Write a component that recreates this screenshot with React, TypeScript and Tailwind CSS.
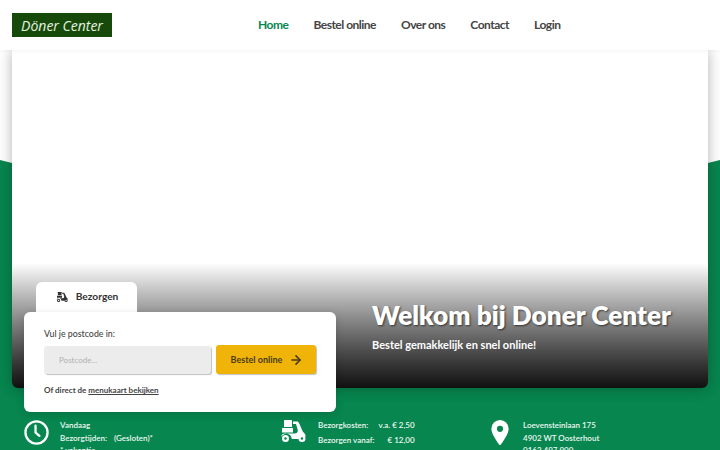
import React from 'react'
import { ArrowRight } from 'lucide-react'

const lato = { fontFamily: 'Lato, sans-serif' }

const ScooterIcon = ({ className }: { className?: string }) => (
  <svg viewBox="0 0 26 22" className={className} fill="currentColor">
    <rect x="4" y="0" width="8" height="7" rx="0.5" />
    <rect x="2" y="8" width="11" height="4.500" rx="0.5" />
    <path d="M13 1.500h4c1 0 1.600.6 2 1.600L23 12c1.600 1 2.500 2.500 2.700 4.500h-3.200c-1.600 0-3 1-3.600 2.600h-7.200c0-3-2.200-5.300-5.200-5.300-2.300 0-4.300 1.300-5.300 3.300C1.200 14.500 3 13.500 5 13.500h9.500c2.500 0 3.700-1.500 3.200-3.800L16 4h-3z" />
    <path fillRule="evenodd" d="M5.500 15a3.500 3.500 0 1 0 0 7 3.500 3.500 0 0 0 0-7zm0 2.200a1.300 1.300 0 1 1 0 2.600 1.300 1.300 0 0 1 0-2.600zM22 15a3.500 3.500 0 1 0 0 7 3.500 3.500 0 0 0 0-7zm0 2.200a1.300 1.300 0 1 1 0 2.600 1.300 1.300 0 0 1 0-2.600z" />
  </svg>
)

const App: React.FC = () => {
  const links = ['Home', 'Bestel online', 'Over ons', 'Contact', 'Login']

  return (
    <div className="relative h-[450px] w-[720px] overflow-hidden bg-white" style={lato}>
      {/* green backdrop behind the hero */}
      <div className="absolute inset-x-0 top-[160px] bottom-0 bg-[#07864f] [clip-path:polygon(0_0,12px_3px,708px_3px,100%_0,100%_100%,0_100%)]"></div>

      <header className="relative z-10 flex h-[50px] items-center bg-white pl-3 shadow-[0_1px_4px_rgba(0,0,0,0.05)]">
        <div className="flex h-6 w-[100px] items-center justify-center whitespace-nowrap bg-[#174a0a] text-[#e6f2e0] italic" style={{ fontFamily: '"Open Sans", sans-serif', fontSize: 14 }}>
          Döner Center
        </div>
        <nav className="ml-[146px] flex gap-[25px]">
          {links.map((l, i) => (
            <a key={l} className={`text-[12px] font-bold tracking-[-0.5px] ${i === 0 ? 'text-[#07864f]' : 'text-[#444]'}`}>{l}</a>
          ))}
        </nav>
      </header>

      <main className="relative mx-3 h-[338px] rounded-b-md bg-gradient-to-b from-white from-[63%] to-[#111] shadow-[0_0_14px_rgba(0,0,0,0.3)]">
        <div className="absolute top-[232px] left-[24px] flex h-[30px] w-[101px] items-center justify-center gap-2 rounded-t-md bg-white pl-[1px] text-[10.200px] font-bold text-[#333]">
          <ScooterIcon className="h-[10px] w-3" />
          Bezorgen
        </div>
        <div className="absolute top-[262px] left-[12px] z-10 h-[100px] w-[312px] rounded-md bg-white px-5 pt-[15px] shadow-[0_2px_8px_rgba(0,0,0,0.15)]">
          <p className="text-[8.800px] leading-[14px] font-medium text-[#444]">Vul je postcode in:</p>
          <div className="mt-[4px] flex items-start gap-[5px]">
            <div className="mt-[1px] flex h-[28px] w-[167px] items-center rounded-[3px] bg-[#ececec] pl-[15px] text-[8px] text-[#b0b0b0] shadow-[1px_1px_1px_rgba(0,0,0,0.25)]">Postcode...</div>
            <div className="flex h-[29px] w-[100px] items-center justify-center gap-[7px] rounded-[3px] bg-[#f0b409] pl-[2px] text-[9px] font-bold text-[#4a3a10] shadow-[1px_1px_1px_rgba(0,0,0,0.25)]">
              Bestel online
              <ArrowRight className="h-[14px] w-[14px]" strokeWidth={2.75} />
            </div>
          </div>
          <p className="mt-[9px] text-[8px] leading-[14px] font-bold text-[#444]">Of direct de <span className="underline">menukaart bekijken</span></p>
        </div>
        <div className="absolute top-[248px] left-[360px] text-white">
          <h1 className="text-[26.200px] leading-[34px] font-extrabold [text-shadow:1px_1px_2px_rgba(0,0,0,0.6)]">Welkom bij Doner Center</h1>
          <p className="mt-[5px] text-[11px] font-bold">Bestel gemakkelijk en snel online!</p>
        </div>
      </main>

      <section className="relative grid grid-cols-[257px_210px_1fr] pt-[31px] pl-6 text-[8px] leading-[12.500px] font-semibold text-[#eef8f2]">
        <div className="flex gap-[11px]">
          <svg viewBox="0 0 26 26" className="mt-[1px] h-[25px] w-[25px] text-white" fill="none" stroke="currentColor" strokeWidth="2.400" strokeLinecap="round">
            <circle cx="13" cy="13" r="11.500" />
            <path d="M12 6v7l4 3.500" />
          </svg>
          <div>
            <p>Vandaag</p>
            <p>Bezorgtijden: <span className="ml-[5px]">(Gesloten)*</span></p>
            <p>* vakantie</p>
          </div>
        </div>
        <div className="flex gap-[12px]">
          <ScooterIcon className="mt-[1px] -ml-[1px] h-[22px] w-[26px] text-white" />
          <div className="grid grid-cols-[auto_auto] content-start gap-x-[4px] gap-y-[2.500px]">
            <p>Bezorgkosten:</p><p className="text-right">v.a. € 2,50</p>
            <p>Bezorgen vanaf:</p><p className="text-right">€ 12,00</p>
          </div>
        </div>
        <div className="flex gap-[14px]">
          <svg viewBox="0 0 18 26" className="mt-[1px] h-[25px] w-[18px] text-white" fill="currentColor">
            <path fillRule="evenodd" d="M9 0a9 9 0 0 0-9 9c0 6 7 14.500 8 16.500.4.700 1.600.700 2 0C11 23.500 18 15 18 9a9 9 0 0 0-9-9zm0 6a3.200 3.200 0 1 1 0 6.400A3.200 3.200 0 0 1 9 6z" />
          </svg>
          <div>
            <p>Loevensteinlaan 175</p>
            <p>4902 WT Oosterhout</p>
            <p>0162 497 900</p>
          </div>
        </div>
      </section>
    </div>
  )
}

export default App
